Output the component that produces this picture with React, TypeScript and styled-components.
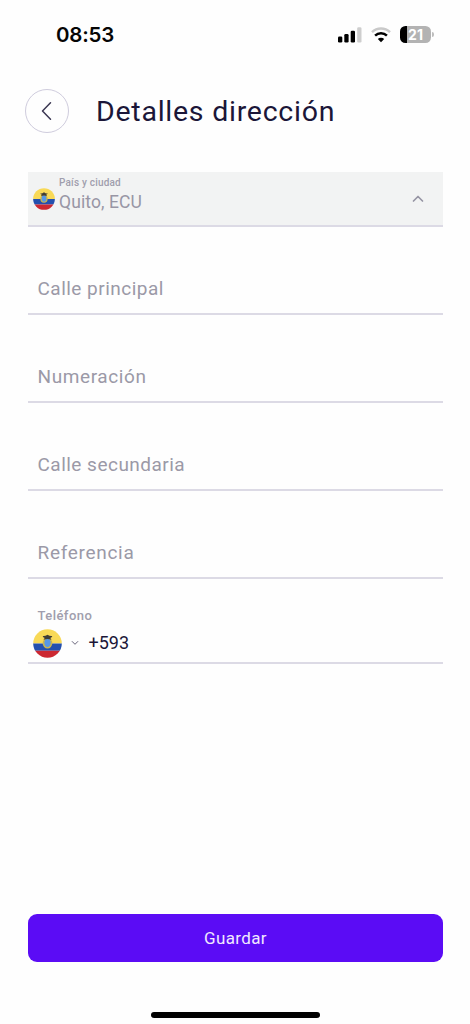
import React from 'react';
import styled, { createGlobalStyle } from 'styled-components';

const Global = createGlobalStyle`
  * { box-sizing: border-box; }
  body { margin: 0; background: #fefefe; font-family: Roboto, "Noto Sans", sans-serif; }
`;

const Screen = styled.main`
  width: 470px;
  height: 1024px;
  display: flex;
  flex-direction: column;
  background: #fefefe;
  color: #1b1638;
  overflow: hidden;
`;

const StatusBar = styled.div`
  height: 68px;
  padding: 1px 36px 0 56px;
  display: flex;
  align-items: center;
  justify-content: space-between;
`;

const Time = styled.span`
  font: 600 20.5px/24px Inter, sans-serif;
  letter-spacing: -0.2px;
  color: #050505;
`;

const StatusIcons = styled.div`
  display: flex;
  align-items: center;
  gap: 9px;
`;

const Battery = styled.div`
  display: flex;
  align-items: center;
  gap: 1px;
`;

const BatteryBody = styled.div`
  width: 31px;
  height: 17px;
  border-radius: 5.5px;
  background: linear-gradient(90deg, #000 7px, #b3b3b3 7px);
  color: #fff;
  font: 700 14px/17px Inter, sans-serif;
  text-align: center;
`;

const BatteryTip = styled.div`
  width: 2px;
  height: 5px;
  border-radius: 0 2px 2px 0;
  background: #bdbdbd;
`;

const Header = styled.header`
  height: 86px;
  padding-left: 25px;
  display: flex;
  align-items: center;
  gap: 27px;
`;

const BackButton = styled.button`
  width: 44px;
  height: 44px;
  padding: 0;
  display: grid;
  place-items: center;
  border: 1px solid #cfccdd;
  border-radius: 50%;
  background: transparent;
`;

const Title = styled.h1`
  margin: 0;
  padding-top: 2px;
  font-size: 28.5px;
  line-height: 34px;
  font-weight: 400;
  letter-spacing: 0.75px;
`;

const Form = styled.form`
  flex: 1;
  padding: 18px 27px 0 28px;
  display: flex;
  flex-direction: column;
`;

const CountryField = styled.div`
  height: 55px;
  padding: 0 19px 0 4.5px;
  display: flex;
  align-items: center;
  background: #f2f3f3;
  border-bottom: 2px solid #dcdae5;
`;

const CountryText = styled.div`
  flex: 1;
  padding: 0 0 8px 4.5px;
  display: flex;
  flex-direction: column;
`;

const Label = styled.span<{ $size: number; $spacing: number }>`
  font-size: ${(p) => p.$size}px;
  line-height: ${(p) => p.$size + 2}px;
  letter-spacing: ${(p) => p.$spacing}px;
  font-weight: 500;
  color: #a09ead;
`;

const CountryValue = styled.span`
  padding-top: 2px;
  font-size: 17.5px;
  line-height: 22px;
  letter-spacing: 0.1px;
  color: #9896a5;
`;

const Field = styled.label<{ $spacing: number }>`
  height: 88px;
  padding: 0 0 12px 9.5px;
  display: flex;
  align-items: flex-end;
  border-bottom: 2px solid #dcdae5;
  font-size: 19px;
  line-height: 24px;
  letter-spacing: ${(p) => p.$spacing}px;
  color: #9b99a7;
`;

const PhoneField = styled.div`
  height: 85px;
  padding: 26px 0 0 4.5px;
  border-bottom: 2px solid #dcdae5;
`;

const PhoneLabel = styled.div`
  height: 23px;
  padding-left: 5px;
`;

const PhoneRow = styled.div`
  height: 30px;
  display: flex;
  align-items: center;
`;

const Prefix = styled.span`
  padding-left: 9.5px;
  font-size: 18px;
  line-height: 24px;
`;

const Chevron = styled.svg`
  display: block;
  fill: none;
  stroke-linecap: round;
  stroke-linejoin: round;
`;

const SmallChevron = styled(Chevron)`
  margin-left: 9.5px;
`;

const Footer = styled.footer`
  height: 110px;
  padding: 0 27px 0 28px;
  display: flex;
  flex-direction: column;
  align-items: center;
`;

const SaveButton = styled.button`
  width: 100%;
  height: 48px;
  border: 0;
  border-radius: 9px;
  background: #5b0cf5;
  color: #f0e8ff;
  font: 400 17px/24px Roboto, sans-serif;
  letter-spacing: 0.35px;
`;

const HomeIndicator = styled.div`
  width: 169px;
  height: 6px;
  margin-top: 50px;
  border-radius: 3px;
  background: #000;
`;

const Flag = ({ size, id }: { size: number; id: string }) => (
  <svg width={size} height={size} viewBox="0 0 30 30" aria-label="Ecuador">
    <defs>
      <clipPath id={id}><circle cx="15" cy="15" r="14.8" /></clipPath>
    </defs>
    <g clipPath={`url(#${id})`}>
      <path fill="#f8d957" d="M0 0h30v15H0z" />
      <path fill="#2450ae" d="M0 15h30v7.5H0z" />
      <path fill="#cc2832" d="M0 22.5h30V30H0z" />
    </g>
    <ellipse cx="15" cy="14.8" rx="5" ry="5.4" fill="#c9b550" />
    <ellipse cx="15" cy="14.3" rx="3.2" ry="4.3" fill="#5798e6" />
    <path d="M10 7.3q3.3.2 4-.8 1-1.1 2 0 .7 1 4 .8-.3 1.7-2.2 2 1 .5 1.2 1.7-2.2-.7-4-.7t-4 .7q.2-1.2 1.2-1.7-1.9-.3-2.2-2z" fill="#403d35" />
  </svg>
);

const App = () => (
  <>
    <Global />
    <Screen>
      <StatusBar>
        <Time>08:53</Time>
        <StatusIcons>
          <svg width="24" height="16" viewBox="0 0 24 16">
            <rect x="0" y="9.5" width="4.3" height="6" rx="1.3" />
            <rect x="6.3" y="7" width="4.3" height="8.5" rx="1.3" />
            <rect x="12.7" y="3.7" width="4.3" height="11.8" rx="1.3" />
            <rect x="19.2" y="0.3" width="4.3" height="15.2" rx="1.3" fill="#cecece" />
          </svg>
          <svg width="20" height="16" viewBox="0 0 20 16" fill="none" strokeWidth="2.5">
            <path d="M1 5.1a13 13 0 0 1 18 0" stroke="#c9c9c9" />
            <path d="M4.1 8.7a8.5 8.5 0 0 1 11.8 0" stroke="#000" />
            <path d="M10 15.2 6.8 12a4.6 4.6 0 0 1 6.4 0z" fill="#000" />
          </svg>
          <Battery>
            <BatteryBody>21</BatteryBody>
            <BatteryTip />
          </Battery>
        </StatusIcons>
      </StatusBar>
      <Header>
        <BackButton type="button" aria-label="Volver">
          <Chevron width="12" height="20" viewBox="0 0 12 20" stroke="#3b3752" strokeWidth="1.5">
            <path d="M9.5 1.8 1.5 10l8 8.2" />
          </Chevron>
        </BackButton>
        <Title>Detalles dirección</Title>
      </Header>
      <Form>
        <CountryField>
          <Flag size={22} id="flag-country" />
          <CountryText>
            <Label $size={10} $spacing={0.2}>País y ciudad</Label>
            <CountryValue>Quito, ECU</CountryValue>
          </CountryText>
          <Chevron width="12" height="8" viewBox="0 0 12 8" stroke="#9694a3" strokeWidth="1.7">
            <path d="m1.5 6 4.5-4.5L10.5 6" />
          </Chevron>
        </CountryField>
        <Field $spacing={0.48}>Calle principal</Field>
        <Field $spacing={0.6}>Numeración</Field>
        <Field $spacing={0.48}>Calle secundaria</Field>
        <Field $spacing={0.7}>Referencia</Field>
        <PhoneField>
          <PhoneLabel><Label $size={13} $spacing={0.45}>Teléfono</Label></PhoneLabel>
          <PhoneRow>
            <Flag size={29} id="flag-phone" />
            <SmallChevron width="8" height="6" viewBox="0 0 8 6" stroke="#68647a" strokeWidth="1">
              <path d="m1.2 1.5 2.8 2.8 2.8-2.8" />
            </SmallChevron>
            <Prefix>+593</Prefix>
          </PhoneRow>
        </PhoneField>
      </Form>
      <Footer>
        <SaveButton type="button">Guardar</SaveButton>
        <HomeIndicator />
      </Footer>
    </Screen>
  </>
);

export default App;
